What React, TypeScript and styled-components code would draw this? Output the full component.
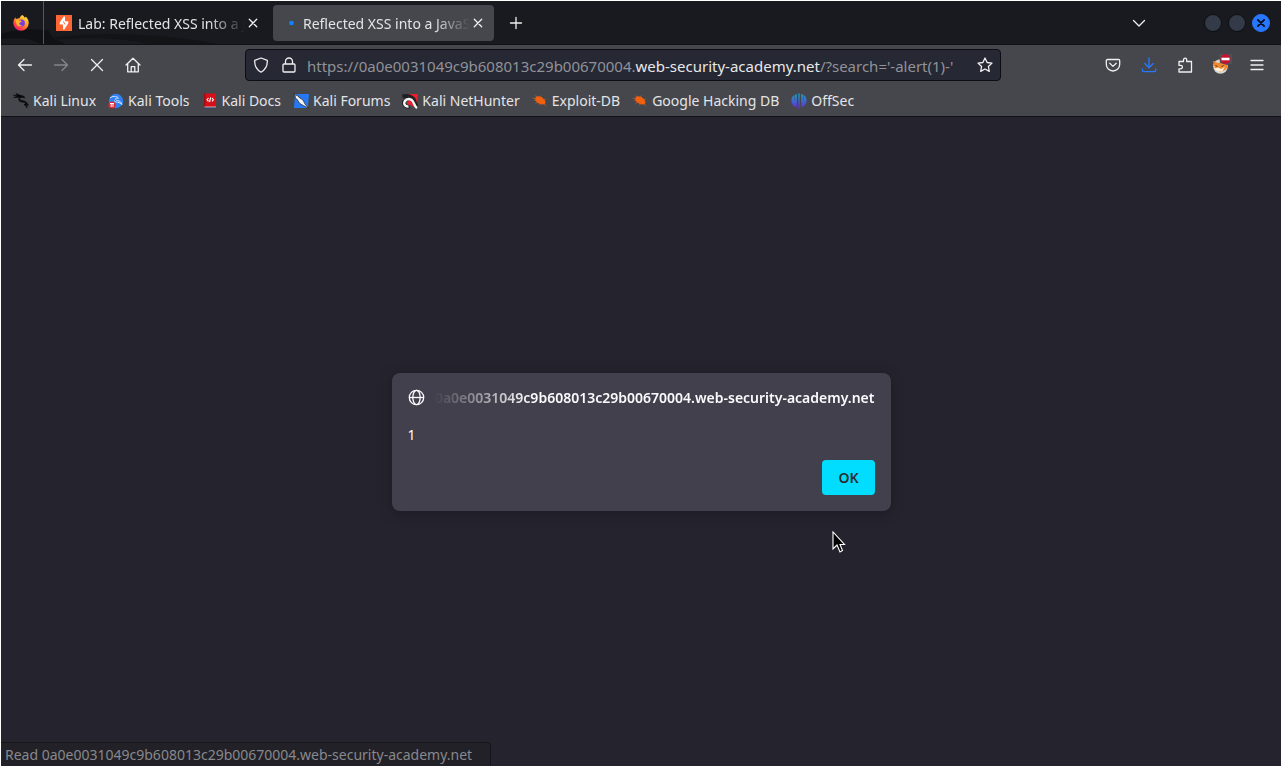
import React from 'react';
import styled, { createGlobalStyle } from 'styled-components';

const Global = createGlobalStyle`
  *, *::before, *::after { box-sizing: border-box; }
  body { margin: 0; background: #25242e; font: 14px/20px "Noto Sans", sans-serif; color: #e4e4e6; }
  button { font: inherit; color: inherit; }
`;

const Window = styled.div`
  display: flex;
  flex-direction: column;
  min-height: 100vh;
  border: 1px solid #fff;
  background: #25242e;
`;

const TabStrip = styled.header`
  position: relative;
  display: flex;
  align-items: center;
  height: 44px;
  background: #191a1f;
  border-bottom: 1px solid #101114;
`;

const Dragon = styled.svg`
  position: absolute;
  left: 0;
  bottom: 0;
`;

const Pinned = styled.button`
  position: relative;
  display: grid;
  place-items: center;
  width: 43px;
  height: 100%;
  padding: 0 3px 0 0;
  border: 0;
  border-right: 1px solid #55565b;
  background: none;
`;

const Tab = styled.div<{ $active?: boolean }>`
  position: relative;
  display: flex;
  align-items: center;
  width: ${p => (p.$active ? 221 : 225)}px;
  height: 36px;
  margin-right: ${p => (p.$active ? 0 : 4)}px;
  padding: 0 8px 0 12px;
  border-radius: 4px;
  background: ${p => (p.$active ? '#45474d' : 'transparent')};
`;

const TabTitle = styled.span`
  flex: 1;
  min-width: 0;
  padding: 2px 0 0 6px;
  overflow: hidden;
  white-space: nowrap;
  mask-image: linear-gradient(to left, transparent, #000 36px);
`;

const IconButton = styled.button<{ $size?: number }>`
  display: grid;
  place-items: center;
  flex: none;
  width: ${p => p.$size ?? 36}px;
  height: ${p => Math.min(p.$size ?? 36, 30)}px;
  padding: 0;
  border: 0;
  background: none;
`;

const Spacer = styled.div`
  flex: 1;
`;

const WindowControls = styled.div`
  display: flex;
  gap: 6px;
  margin: 0 11px 0 47px;
`;

const Dot = styled.button<{ $close?: boolean }>`
  display: grid;
  place-items: center;
  width: 18px;
  height: 18px;
  padding: 0;
  border: 1px solid ${p => (p.$close ? '#2777ff' : '#0d0e12')};
  border-radius: 50%;
  background: ${p => (p.$close ? '#2777ff' : '#343b48')};
`;

const NavBar = styled.nav`
  display: grid;
  grid-template-columns: 238px minmax(0, 756px) 1fr;
  align-items: center;
  height: 40px;
  padding: 0 6px;
  background: #45474d;
`;

const Group = styled.div<{ $end?: boolean }>`
  display: flex;
  justify-content: ${p => (p.$end ? 'flex-end' : 'flex-start')};
`;

const UrlBox = styled.div`
  display: flex;
  align-items: center;
  height: 32px;
  padding: 0 5px;
  border: 1px solid #0d0e13;
  border-radius: 4px;
  background: #262834;
`;

const Address = styled.div`
  flex: 1;
  min-width: 0;
  padding-top: 1px;
  overflow: hidden;
  white-space: nowrap;
  font-size: 15px;
  color: #919298;
`;

const Host = styled.span`
  color: #e8e8ea;
`;

const Bookmarks = styled.div`
  display: flex;
  align-items: center;
  gap: 12px;
  height: 32px;
  padding: 0 12px;
  background: #45474d;
  border-bottom: 1px solid #101114;
`;

const Bookmark = styled.a`
  display: flex;
  align-items: center;
  gap: 4px;
  color: inherit;
  text-decoration: none;
  white-space: nowrap;
`;

const Content = styled.main`
  position: relative;
  display: flex;
  flex: 1;
  flex-direction: column;
  align-items: center;
  justify-content: center;
`;

const Dialog = styled.section`
  width: 499px;
  max-width: 100%;
  padding: 15px 16px 16px;
  border-radius: 8px;
  background: #42404c;
  box-shadow: 0 2px 12px #15141a88;
`;

const DialogHead = styled.div`
  display: flex;
  align-items: center;
  gap: 9px;
`;

const DialogTitle = styled.h1`
  display: flex;
  flex: 1;
  justify-content: flex-end;
  min-width: 0;
  margin: 0;
  overflow: hidden;
  white-space: nowrap;
  font-size: 14px;
  font-weight: 600;
  line-height: 20px;
  color: #fbfbfe;
  mask-image: linear-gradient(to right, transparent, #000 96px);
`;

const Message = styled.p`
  margin: 17px 0 15px;
  color: #fbfbfe;
`;

const OkButton = styled.button`
  display: block;
  height: 35px;
  margin-left: auto;
  padding: 2px 16px 0;
  border: 0;
  border-radius: 4px;
  background: #00ddff;
  color: #2b2a33;
  font-weight: 600;
`;

const Status = styled.output`
  position: absolute;
  left: 0;
  bottom: 0;
  min-width: 490px;
  height: 24px;
  padding: 2px 5px 0 4px;
  border: 1px solid #15151b;
  border-width: 1px 1px 0 0;
  border-top-right-radius: 4px;
  background: #222127;
  color: #88888d;
`;

const Pointer = styled.svg`
  position: absolute;
  left: calc(50% + 191px);
  top: calc(50% + 89px);
`;

const Line = ({ d, color = '#f0f0f1', size = 16, width = 1.3 }: { d: string; color?: string; size?: number; width?: number }) => (
  <svg width={size} height={size} viewBox="0 0 16 16" fill="none" stroke={color} strokeWidth={width} strokeLinecap="round" strokeLinejoin="round" aria-hidden="true">
    <path d={d} />
  </svg>
);

const CLOSE = 'M4.300 4.300l7.400 7.400M11.700 4.300l-7.400 7.400';

const Firefox = () => (
  <svg width="18" height="18" viewBox="0 0 18 18" aria-hidden="true">
    <defs>
      <linearGradient id="fox" x1="0.9" y1="0" x2="0.2" y2="1">
        <stop offset="0" stopColor="#fff044" />
        <stop offset="0.45" stopColor="#ff9a20" />
        <stop offset="0.8" stopColor="#ff3750" />
        <stop offset="1" stopColor="#e31587" />
      </linearGradient>
    </defs>
    <path fill="url(#fox)" d="M10.500 1c1.200 1 1.800 1.800 2 2.600 1-.2 1.200-.6 1.200-1.200 2 2 3 4.100 3 6.600a7.700 7.700 0 0 1-15.400.1c0-2.400.8-4.400 2.200-5.900 0 .9.3 1.500.7 1.900 1-.7 2.200-1 3.300-.9.7-1.500 1.500-2.600 3-3.200z" />
    <circle cx="9.300" cy="9" r="3.600" fill="#7c3be0" />
    <path fill="#ffb42a" d="M3.600 6c1.500-.9 2.900-.5 3.900.4 1 .1 2 .3 2.300.8-.4 1-1.900 1-2.500 1.900-.3 1.900 1.500 2.500 2.800 2.300-1.200 1.400-3.900 1.300-5.400-.4z" />
  </svg>
);

const Burp = () => (
  <svg width="16" height="16" viewBox="0 0 16 16" aria-hidden="true">
    <path fill="#ff6633" d="M0 0h16v16H0z" />
    <path fill="#fff" d="M9 1.500v4.800h3.300v2L8.300 14.500H7V9.500H3.700v-2L7.700 1.500z" />
    <path d="M7.300 6.300L9 9.500" stroke="#ff6633" strokeWidth="0.900" />
  </svg>
);

const dragonPath = 'M0.500 2.200l4 .2L3 .6l5 2c2.500.2 3.500 1 4 2.200l-2.500-.3c-2.500-.2-3.300.8-2.700 1.900.8 1.400 3.500.9 5.500 2.100 1.800 1.100 1.900 2.600 3.400 3.700-2.100-.1-2.500-1.900-3.900-2.600-1.900-.9-4.600-.2-5.800-2.100C5.200 6.200 5.700 5 6.500 4.200L0.800 4.500l3.400-1z M12.500 10.500c1.700 1 1.900 2.800 1.300 4.500-.3-1.800-1.200-2.700-2.800-3.200z';

const KaliLinux = () => (
  <svg width="16" height="16" viewBox="0 0 16 16" aria-hidden="true">
    <path d={dragonPath} fill="#08090b" stroke="#08090b" strokeWidth="0.600" />
  </svg>
);

const KaliTools = () => (
  <svg width="16" height="16" viewBox="0 0 16 16" aria-hidden="true">
    <circle cx="8" cy="8" r="7.200" fill="#2e82f7" />
    <path d="M2 5c4-3 8-1 8.500.2C6 4.500 7 7 9.500 7.500s4 2 4.500 4c-2-3-7-1.500-8-4" fill="none" stroke="#d5e4fa" strokeWidth="1" />
    <circle cx="4" cy="12" r="3.600" fill="#df2631" />
    <path d="M2 10.500h4M3.200 10.500v3.500M5 10.500v3.500" stroke="#fff" strokeWidth="1" />
  </svg>
);

const KaliDocs = () => (
  <svg width="16" height="16" viewBox="0 0 16 16" aria-hidden="true">
    <path fill="#d60f18" d="M2 .5h12v13.500H2z" />
    <path fill="#9d0911" d="M2 .5h1.300v14H2z" />
    <path fill="#d8dbe0" d="M2.500 13.600h11.500v1H2.500z" />
    <path fill="#29436f" d="M2 14.600h12v1H2z" />
    <path d="M6.500 5L5 6.700l1.500 1.700M8.700 4.500L7.500 9M10 5l1.500 1.700L10 8.400" fill="none" stroke="#fff" strokeWidth="1.100" />
  </svg>
);

const KaliForums = () => (
  <svg width="16" height="16" viewBox="0 0 16 16" aria-hidden="true">
    <path fill="#2678f5" d="M2 1h14l-1.200 14H1z" />
    <path fill="#f2f2f2" stroke="#20242c" strokeWidth="0.700" d="M.3.500L3 2.500l1.500-.5 1 2 4.500 3 2 4 3.300 4.200-5-2.700-3.500-2-3-4.500-1.500-.5L2.500 4z" />
  </svg>
);

const KaliNetHunter = () => (
  <svg width="16" height="16" viewBox="0 0 16 16" aria-hidden="true">
    <path fill="#e8202c" d="M4 1h12l-1.500 13L9 13z" />
    <path fill="none" stroke="#1e2025" strokeWidth="4" d="M.5 3.500C7 1.500 12 5 12.500 8.500c.5 2 1.500 4 2.500 5.500M2.500 8c-1.500 3 1 6.500 5 5.500" />
    <path fill="none" stroke="#f6f6f6" strokeWidth="2.400" d="M15 15c-2.500-1.500-2.500-4-4-6.500C9.500 5.500 5 5 3 8s.5 6 3.500 5.500" />
    <circle cx="7" cy="10" r="2" fill="#e8202c" />
  </svg>
);

const Bug = () => (
  <svg width="16" height="16" viewBox="0 0 16 16" aria-hidden="true">
    <path d="M3.500 4.800C5 2.600 8.500 3 11 5.300c2.400 2 3 4.200 2 5.400-1.500 1.500-5 .8-7.300-.9-2.200-1.500-3.200-3.500-2.200-5z" fill="#f0600e" />
    <path d="M4.500 4L3.500 2.500M8.500 4l.7-1.500M12 6.500l2-.5M4 5.500L.6 5.200M4 7l-2 .5M6 9L3.500 10.500M8.500 10.500l-1 2M12 11l2.500 2" stroke="#c4602d" strokeWidth="0.700" />
  </svg>
);

const OffSec = () => (
  <svg width="16" height="16" viewBox="0 0 16 16" aria-hidden="true">
    <defs>
      <linearGradient id="offsec" gradientUnits="userSpaceOnUse" x1="0" y1="0" x2="0" y2="16">
        <stop stopColor="#14a9bd" />
        <stop offset="0.500" stopColor="#3e65d4" />
        <stop offset="1" stopColor="#6a25c9" />
      </linearGradient>
    </defs>
    <path fill="url(#offsec)" d="M5.800 1v13.500C2.300 13.500.4 11 .4 7.500S2.300 1.900 5.800 1zM7.300.5h1.400v15H7.300zM10.200 1c3.500.9 5.400 3 5.400 6.500s-1.900 6-5.400 7z" />
    <path stroke="#45474d" strokeWidth="0.500" d="M3.500 2v5M12.500 2v5" />
  </svg>
);

const FoxBlocked = () => (
  <svg width="22" height="22" viewBox="0 0 22 22" aria-hidden="true">
    <circle cx="10.500" cy="12.500" r="7.300" fill="#d9d6cf" />
    <path fill="#f0882d" d="M3 7l5 2 6-1 4 1 0 4-3 3-5 2-5-3z" />
    <path fill="#fff3df" d="M4 14.500l4-1 3 1.500 4-2-3 4.500H8z" />
    <path stroke="#52331e" strokeWidth="1" d="M5.500 11.500l2 1M11.500 12.500l2-1" />
    <path fill="#505157" d="M9 0h13v10h-3l-2 1-7-2z" />
    <circle cx="15.500" cy="5" r="5" fill="#c4122e" />
    <path fill="#fff" d="M11.500 3.700h8v2.600h-8z" />
  </svg>
);

const bookmarks: [string, React.FC][] = [
  ['Kali Linux', KaliLinux],
  ['Kali Tools', KaliTools],
  ['Kali Docs', KaliDocs],
  ['Kali Forums', KaliForums],
  ['Kali NetHunter', KaliNetHunter],
  ['Exploit-DB', Bug],
  ['Google Hacking DB', Bug],
  ['OffSec', OffSec],
];

export default function App() {
  return (
    <Window>
      <Global />
      <TabStrip>
        <Dragon width="245" height="15" viewBox="0 0 245 15" aria-hidden="true">
          <path fill="#101115" d="M0 5c15-5 30-5 47-4l6 9 12 5H40C28 8 15 9 0 10z" />
          <path fill="#131418" d="M53 8c60-6 110-3 165 7h-70C120 9 90 8 55 11z" />
        </Dragon>
        <Pinned aria-label="Firefox"><Firefox /></Pinned>
        <Tab>
          <Burp />
          <TabTitle>Lab: Reflected XSS into a J</TabTitle>
          <IconButton $size={16} aria-label="Close tab"><Line d={CLOSE} /></IconButton>
        </Tab>
        <Tab $active>
          <svg width="12" height="16" viewBox="0 0 12 16" aria-hidden="true"><circle cx="6.500" cy="8" r="2.300" fill="#1283ff" /></svg>
          <TabTitle>Reflected XSS into a JavaS</TabTitle>
          <IconButton $size={16} aria-label="Close tab"><Line d={CLOSE} /></IconButton>
        </Tab>
        <IconButton $size={44} aria-label="New tab"><Line d="M8 2.500v11M2.500 8h11" /></IconButton>
        <Spacer />
        <IconButton aria-label="List all tabs"><Line d="M2.500 5.500L8 11l5.500-5.500" /></IconButton>
        <WindowControls>
          <Dot aria-label="Minimize" />
          <Dot aria-label="Maximize" />
          <Dot $close aria-label="Close window"><Line d="M3 3l10 10M13 3L3 13" color="#06101f" size={10} width={3} /></Dot>
        </WindowControls>
      </TabStrip>
      <NavBar>
        <Group>
          <IconButton aria-label="Back"><Line d="M7 2.500L1.500 8 7 13.500M1.500 8h13" /></IconButton>
          <IconButton aria-label="Forward" disabled><Line d="M9 2.500L14.500 8 9 13.500M14.500 8h-13" color="#85868b" /></IconButton>
          <IconButton aria-label="Stop"><Line d="M2.500 2.500l11 11M13.500 2.500l-11 11" /></IconButton>
          <IconButton aria-label="Home"><Line d="M1 8l7-6.700L15 8M2.700 6.800v8h10.600v-8M6.200 14.500V9.700h3.600v4.800" /></IconButton>
        </Group>
        <UrlBox>
          <IconButton $size={20} aria-label="Tracking protection"><Line d="M8 1l6.300 2.300c.3 5.300-1.800 9.500-6.300 11.900C3.500 12.800 1.400 8.600 1.700 3.300z" /></IconButton>
          <IconButton aria-label="Site information"><Line d="M3 7h10c.6 0 1 .4 1 1v6c0 .6-.4 1-1 1H3c-.6 0-1-.4-1-1V8c0-.6.4-1 1-1zM4.500 7V4.500a3.500 3.500 0 0 1 7 0V7" /></IconButton>
          <Address>https://0a0e0031049c9b608013c29b00670004.<Host>web-security-academy.net</Host>/?search='-alert(1)-'</Address>
          <IconButton $size={20} aria-label="Bookmark this page"><Line d="M8 1l2.100 4.500 4.900.6-3.600 3.400.9 4.900L8 12l-4.300 2.400.9-4.900L1 6.100l4.900-.6z" /></IconButton>
        </UrlBox>
        <Group $end>
          <IconButton aria-label="Pocket"><Line d="M2.500 2.500h11c.7 0 1.200.5 1.200 1.200v3.600a6.700 6.700 0 0 1-13.400 0V3.700c0-.7.5-1.200 1.200-1.200zM4.800 6.300L8 9.400l3.200-3.100" /></IconButton>
          <IconButton aria-label="Downloads"><Line color="#2777ff" d="M8 .8v9.700M3.800 6.500L8 10.700l4.200-4.200M1.300 12v1c0 1 .7 1.700 1.700 1.700h10c1 0 1.700-.7 1.700-1.700v-1" /></IconButton>
          <IconButton aria-label="Extensions"><Line d="M2 6.500V4.500h4.500V2.800a1.600 1.600 0 0 1 3.200 0v1.700H14.500V15H2v-3.200h1.700a1.700 1.700 0 0 0 0-3.400H2z" /></IconButton>
          <IconButton aria-label="FoxyProxy"><FoxBlocked /></IconButton>
          <IconButton aria-label="Application menu"><Line d="M2 3.500h12M2 8h12M2 12.500h12" /></IconButton>
        </Group>
      </NavBar>
      <Bookmarks>
        {bookmarks.map(([name, Icon]) => (
          <Bookmark href="#" key={name}><Icon />{name}</Bookmark>
        ))}
      </Bookmarks>
      <Content>
        <Dialog role="dialog" aria-labelledby="origin">
          <DialogHead>
            <svg width="17" height="17" viewBox="0 0 17 17" fill="none" stroke="#fbfbfe" strokeWidth="1.300" aria-hidden="true">
              <circle cx="8.500" cy="8.500" r="7.200" />
              <ellipse cx="8.500" cy="8.500" rx="3.700" ry="7.200" />
              <path d="M1.300 8.500h14.400" />
            </svg>
            <DialogTitle id="origin">0a0e0031049c9b608013c29b00670004.web-security-academy.net</DialogTitle>
          </DialogHead>
          <Message>1</Message>
          <OkButton>OK</OkButton>
        </Dialog>
        <Pointer width="14" height="24" viewBox="0 0 14 24" aria-hidden="true">
          <path d="M1 1v17l4-4 3 7 2.500-1.500-2.500-6h4.500z" fill="#000" stroke="#fff" strokeWidth="1.100" />
        </Pointer>
        <Status>Read 0a0e0031049c9b608013c29b00670004.web-security-academy.net</Status>
      </Content>
    </Window>
  );
}
